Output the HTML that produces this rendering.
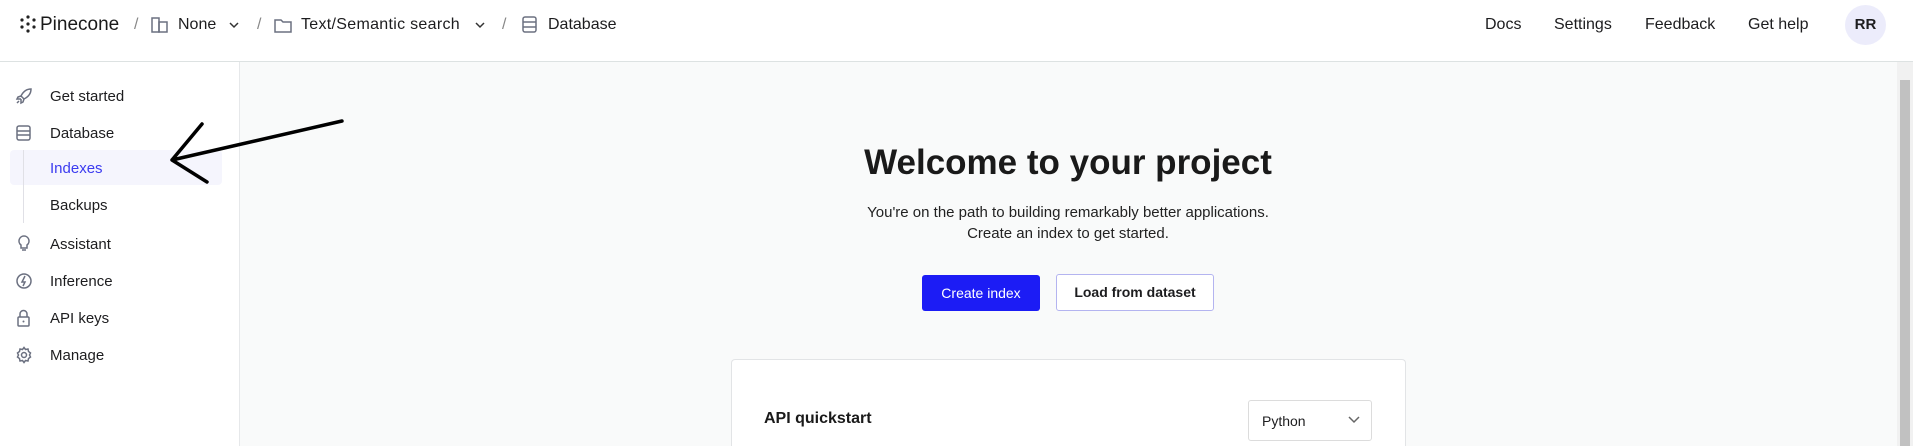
<!DOCTYPE html>
<html><head><meta charset="utf-8"><style>
*{margin:0;padding:0;box-sizing:border-box}
html,body{width:1913px;height:446px;overflow:hidden}
body{background:#fff;font-family:"Liberation Sans",sans-serif;color:#1d1d1f;position:relative}
.a{position:absolute;white-space:nowrap}
.hdr{font-size:16px;top:16px}
.nav{font-size:15px;left:50px}
svg{position:absolute}
.ic{stroke:#6b7080;fill:none;stroke-width:1.5}
</style></head><body>
<div class="a" style="left:0;top:61px;width:1913px;height:1px;background:#dde2e2"></div>
<div class="a" style="left:239px;top:62px;width:1674px;height:384px;background:#f9fafa;border-left:1px solid #e6e8ea"></div>
<div class="a" style="left:1897px;top:62px;width:16px;height:384px;background:#f1f1f1"></div>
<div class="a" style="left:1900px;top:80px;width:10px;height:366px;background:#c1c1c1"></div>
<!-- header -->
<svg style="left:18px;top:14px" width="20" height="20" viewBox="0 0 20 20"><g fill="#222"><circle cx="10" cy="3" r="1.6"/><circle cx="16" cy="6" r="1.6"/><circle cx="16" cy="13" r="1.6"/><circle cx="10" cy="17" r="1.6"/><circle cx="4" cy="13" r="1.6"/><circle cx="4" cy="6" r="1.6"/><circle cx="10" cy="10" r="1.6"/></g></svg>
<div class="a" style="left:40px;top:14px;font-size:19px;color:#1a1a1a">Pinecone</div>
<div class="a hdr" style="left:134px;color:#888">/</div>
<svg style="left:151px;top:17px" width="18" height="16"><rect class="ic" x="1" y="1" width="7" height="14"/><rect class="ic" x="8" y="5" width="8" height="10"/></svg>
<div class="a hdr" style="left:178px">None</div>
<svg style="left:229px;top:21px" width="10" height="8"><path d="M1 2l4 4 4-4" stroke="#333" stroke-width="1.5" fill="none"/></svg>
<div class="a hdr" style="left:257px;color:#888">/</div>
<svg style="left:274px;top:17px" width="18" height="16"><path class="ic" d="M1 3h6l2 2h8v10H1z"/></svg>
<div class="a hdr" style="left:301px;letter-spacing:0.3px">Text/Semantic search</div>
<svg style="left:475px;top:21px" width="10" height="8"><path d="M1 2l4 4 4-4" stroke="#333" stroke-width="1.5" fill="none"/></svg>
<div class="a hdr" style="left:502px;color:#888">/</div>
<svg style="left:522px;top:16px" width="16" height="18"><rect class="ic" x="1" y="1" width="13" height="15" rx="2"/><path class="ic" d="M1 6h13M1 11h13"/></svg>
<div class="a hdr" style="left:548px">Database</div>
<div class="a hdr" style="left:1485px">Docs</div>
<div class="a hdr" style="left:1554px">Settings</div>
<div class="a hdr" style="left:1645px">Feedback</div>
<div class="a hdr" style="left:1748px">Get help</div>
<div class="a" style="left:1845px;top:5px;width:41px;height:40px;border-radius:50%;background:#ececfb;font-size:15px;font-weight:bold;text-align:center;line-height:40px">RR</div>
<!-- sidebar -->
<div class="a" style="left:10px;top:150px;width:212px;height:35px;background:#f5f5fd;border-radius:4px"></div>
<div class="a" style="left:23px;top:150px;width:1px;height:73px;background:#e0e0e6"></div>
<svg style="left:15px;top:87px" width="18" height="18"><path class="ic" d="M16 2c-5 0-8 3-10 7l3 3c4-2 7-5 7-10zM6 9l-3 1-1 2 4 0M9 12l-1 3-2 1 0-4M4 14l-2 2"/></svg>
<div class="a nav" style="top:88px">Get started</div>
<svg style="left:15px;top:124px" width="18" height="18"><rect class="ic" x="2" y="2" width="13" height="14" rx="2"/><path class="ic" d="M2 7h13M2 11h13"/></svg>
<div class="a nav" style="top:125px">Database</div>
<div class="a nav" style="top:160px;color:#3b3bf0">Indexes</div>
<div class="a nav" style="top:197px">Backups</div>
<svg style="left:15px;top:235px" width="18" height="18"><path class="ic" d="M9 1a5 5 0 0 0-3 9v3h6v-3a5 5 0 0 0-3-9zM7 15h4"/></svg>
<div class="a nav" style="top:236px">Assistant</div>
<svg style="left:15px;top:272px" width="18" height="18"><circle class="ic" cx="9" cy="9" r="7"/><path d="M10 4l-3 6h3l-2 4" stroke="#6b7080" stroke-width="1.5" fill="none"/></svg>
<div class="a nav" style="top:273px">Inference</div>
<svg style="left:15px;top:309px" width="18" height="18"><rect class="ic" x="3" y="8" width="11" height="9" rx="1"/><path class="ic" d="M5 8V5a3.5 3.5 0 0 1 7 0v3"/><circle cx="8.5" cy="12.5" r="1" fill="#6b7080"/></svg>
<div class="a nav" style="top:310px">API keys</div>
<svg style="left:15px;top:346px" width="18" height="18"><circle class="ic" cx="9" cy="9" r="2.5"/><path class="ic" d="M9 1.5l1.5 2 2.5-.5.5 2.5 2 1.5-1 2 1 2-2 1.5-.5 2.5-2.5-.5L9 16.5l-1.5-2-2.5.5-.5-2.5-2-1.5 1-2-1-2 2-1.5.5-2.5 2.5.5z"/></svg>
<div class="a nav" style="top:347px">Manage</div>
<!-- arrow -->
<svg style="left:0;top:0" width="400" height="200"><path d="M342 121L172 160M202 124L172 160L207 182" stroke="#000" stroke-width="3.5" fill="none" stroke-linecap="round" stroke-linejoin="round"/></svg>
<!-- main -->
<div class="a" style="left:239px;width:1658px;top:143px;text-align:center;font-size:35px;font-weight:bold;color:#1a1a1a">Welcome to your project</div>
<div class="a" style="left:239px;width:1658px;top:202px;text-align:center;font-size:15px;line-height:21px;color:#222">You're on the path to building remarkably better applications.<br>Create an index to get started.</div>
<div class="a" style="left:922px;top:275px;width:118px;height:36px;background:#1c1cf5;border-radius:3px;color:#fff;font-size:14px;text-align:center;line-height:36px">Create index</div>
<div class="a" style="left:1056px;top:274px;width:158px;height:37px;background:#fff;border:1px solid #b4b4f0;border-radius:3px;font-size:14px;font-weight:bold;text-align:center;line-height:35px">Load from dataset</div>
<div class="a" style="left:731px;top:359px;width:675px;height:87px;background:#fff;border:1px solid #e2e4e6;border-bottom:none;border-radius:4px 4px 0 0"></div>
<div class="a" style="left:764px;top:410px;font-size:16px;font-weight:bold;color:#1a1a1a">API quickstart</div>
<div class="a" style="left:1248px;top:400px;width:124px;height:41px;background:#fff;border:1px solid #dcdcdc;border-radius:3px"></div>
<div class="a" style="left:1262px;top:413px;font-size:14px">Python</div>
<svg style="left:1348px;top:416px" width="12" height="8"><path d="M1 1l5 5 5-5" stroke="#666" stroke-width="1.5" fill="none"/></svg>
</body></html>
